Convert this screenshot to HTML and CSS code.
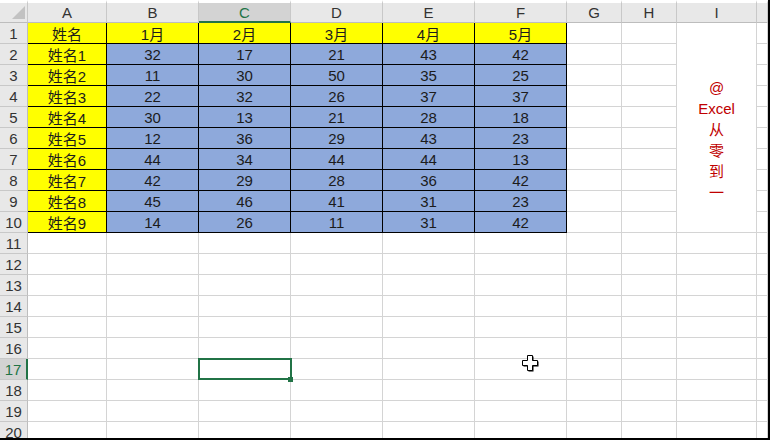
FILE: index.html
```html
<!DOCTYPE html>
<html lang="zh-CN">

<head>
    <meta charset="UTF-8">
    <title>Sheet1</title>
    <link rel="stylesheet" href="styles.css">
</head>

<body>
    <div class="sheet">
        <div class="grid">
            <!-- column headers -->
            <div class="hd corner"><span class="tri"></span></div>
            <div class="hd">A</div>
            <div class="hd">B</div>
            <div class="hd sel">C</div>
            <div class="hd">D</div>
            <div class="hd">E</div>
            <div class="hd">F</div>
            <div class="hd">G</div>
            <div class="hd">H</div>
            <div class="hd">I</div>
            <div class="hd"></div>

            <!-- row 1 -->
            <div class="rh">1</div>
            <div class="c y">姓名</div>
            <div class="c y">1月</div>
            <div class="c y">2月</div>
            <div class="c y">3月</div>
            <div class="c y">4月</div>
            <div class="c y">5月</div>
            <div class="c"></div>
            <div class="c"></div>
            <div class="c merged">
                <span>@</span><span>Excel</span><span>从</span><span>零</span><span>到</span><span>一</span>
            </div>
            <div class="c"></div>

            <div class="rh">2</div>
            <div class="c y">姓名1</div>
            <div class="c b">32</div><div class="c b">17</div><div class="c b">21</div><div class="c b">43</div><div class="c b">42</div>
            <div class="c"></div><div class="c"></div><div class="c"></div>

            <div class="rh">3</div>
            <div class="c y">姓名2</div>
            <div class="c b">11</div><div class="c b">30</div><div class="c b">50</div><div class="c b">35</div><div class="c b">25</div>
            <div class="c"></div><div class="c"></div><div class="c"></div>

            <div class="rh">4</div>
            <div class="c y">姓名3</div>
            <div class="c b">22</div><div class="c b">32</div><div class="c b">26</div><div class="c b">37</div><div class="c b">37</div>
            <div class="c"></div><div class="c"></div><div class="c"></div>

            <div class="rh">5</div>
            <div class="c y">姓名4</div>
            <div class="c b">30</div><div class="c b">13</div><div class="c b">21</div><div class="c b">28</div><div class="c b">18</div>
            <div class="c"></div><div class="c"></div><div class="c"></div>

            <div class="rh">6</div>
            <div class="c y">姓名5</div>
            <div class="c b">12</div><div class="c b">36</div><div class="c b">29</div><div class="c b">43</div><div class="c b">23</div>
            <div class="c"></div><div class="c"></div><div class="c"></div>

            <div class="rh">7</div>
            <div class="c y">姓名6</div>
            <div class="c b">44</div><div class="c b">34</div><div class="c b">44</div><div class="c b">44</div><div class="c b">13</div>
            <div class="c"></div><div class="c"></div><div class="c"></div>

            <div class="rh">8</div>
            <div class="c y">姓名7</div>
            <div class="c b">42</div><div class="c b">29</div><div class="c b">28</div><div class="c b">36</div><div class="c b">42</div>
            <div class="c"></div><div class="c"></div><div class="c"></div>

            <div class="rh">9</div>
            <div class="c y">姓名8</div>
            <div class="c b">45</div><div class="c b">46</div><div class="c b">41</div><div class="c b">31</div><div class="c b">23</div>
            <div class="c"></div><div class="c"></div><div class="c"></div>

            <div class="rh">10</div>
            <div class="c y">姓名9</div>
            <div class="c b">14</div><div class="c b">26</div><div class="c b">11</div><div class="c b">31</div><div class="c b">42</div>
            <div class="c"></div><div class="c"></div><div class="c"></div>

            <!-- empty rows -->
            <div class="rh">11</div>
            <div class="c"></div><div class="c"></div><div class="c"></div><div class="c"></div><div class="c"></div><div class="c"></div><div class="c"></div><div class="c"></div><div class="c"></div><div class="c"></div>
            <div class="rh">12</div>
            <div class="c"></div><div class="c"></div><div class="c"></div><div class="c"></div><div class="c"></div><div class="c"></div><div class="c"></div><div class="c"></div><div class="c"></div><div class="c"></div>
            <div class="rh">13</div>
            <div class="c"></div><div class="c"></div><div class="c"></div><div class="c"></div><div class="c"></div><div class="c"></div><div class="c"></div><div class="c"></div><div class="c"></div><div class="c"></div>
            <div class="rh">14</div>
            <div class="c"></div><div class="c"></div><div class="c"></div><div class="c"></div><div class="c"></div><div class="c"></div><div class="c"></div><div class="c"></div><div class="c"></div><div class="c"></div>
            <div class="rh">15</div>
            <div class="c"></div><div class="c"></div><div class="c"></div><div class="c"></div><div class="c"></div><div class="c"></div><div class="c"></div><div class="c"></div><div class="c"></div><div class="c"></div>
            <div class="rh">16</div>
            <div class="c"></div><div class="c"></div><div class="c"></div><div class="c"></div><div class="c"></div><div class="c"></div><div class="c"></div><div class="c"></div><div class="c"></div><div class="c"></div>
            <div class="rh sel">17</div>
            <div class="c"></div><div class="c"></div><div class="c active"></div><div class="c"></div><div class="c"></div><div class="c"></div><div class="c"></div><div class="c"></div><div class="c"></div><div class="c"></div>
            <div class="rh">18</div>
            <div class="c"></div><div class="c"></div><div class="c"></div><div class="c"></div><div class="c"></div><div class="c"></div><div class="c"></div><div class="c"></div><div class="c"></div><div class="c"></div>
            <div class="rh">19</div>
            <div class="c"></div><div class="c"></div><div class="c"></div><div class="c"></div><div class="c"></div><div class="c"></div><div class="c"></div><div class="c"></div><div class="c"></div><div class="c"></div>
            <div class="rh">20</div>
            <div class="c"></div><div class="c"></div><div class="c"></div><div class="c"></div><div class="c"></div><div class="c"></div><div class="c"></div><div class="c"></div><div class="c"></div><div class="c"></div>
        </div>

        <!-- mouse pointer over the sheet -->
        <svg class="pointer" width="17" height="17" viewBox="0 0 17 17">
            <path d="M6.5 1.5h5v5h5v5h-5v5h-5v-5h-5v-5h5z" fill="#000" />
            <path d="M5.5 0.5h5v5h5v5h-5v5h-5v-5h-5v-5h5z" fill="#fff" stroke="#000" stroke-width="1" />
        </svg>
    </div>
</body>

</html>
```

FILE: styles.css
```css
body {
    margin: 0;
    background: #fff;
    font-family: "Liberation Sans", "Noto Sans CJK SC", sans-serif;
}

.sheet {
    position: relative;
    width: 768px;
    height: 438px;
    overflow: hidden;
    border-right: 2px solid #000;
    border-bottom: 2px solid #000;
}

.grid {
    display: grid;
    grid-template-columns: 28px 79px 92px 92px 92px 92px 92px 55px 55px 80px 1fr;
    grid-template-rows: 23px;
    grid-auto-rows: 21px;
}

.grid > div {
    box-sizing: border-box;
    display: flex;
    align-items: center;
    justify-content: center;
    font-size: 15px;
    color: #1c1c1c;
    white-space: nowrap;
}

/* headers */
.hd {
    background: #e8e8e8;
    border-top: 3px solid #fff;
    border-right: 1px solid #c8c8c8;
    border-bottom: 1px solid #bdbdbd;
    color: #333 !important;
}

.hd.corner {
    justify-content: flex-end;
    align-items: flex-end;
    padding: 0 2px 3px 0;
}

.tri {
    width: 0;
    height: 0;
    border-left: 13px solid transparent;
    border-bottom: 13px solid #c2c2c2;
}

.hd.sel {
    background: #d3d3d3;
    border-bottom: 2px solid #217346;
    color: #217346 !important;
}

.rh {
    background: #e8e8e8;
    border-right: 1px solid #bdbdbd;
    border-bottom: 1px solid #c8c8c8;
    color: #333 !important;
}

.rh.sel {
    background: #d3d3d3;
    border-right: 2px solid #217346;
    color: #217346 !important;
}

/* cells */
.c {
    border-right: 1px solid #d4d4d4;
    border-bottom: 1px solid #d4d4d4;
}

.c.y {
    background: #ffff00;
    border-color: #000;
}

.c.b {
    background: #8ea9db;
    border-color: #000;
}

.c.merged {
    grid-row: span 10;
    flex-direction: column;
    justify-content: flex-start;
    padding-top: 54px;
    color: #c00000;
    line-height: 21px;
}

.c.active {
    position: relative;
}

.c.active::after {
    content: "";
    position: absolute;
    top: -1px;
    left: -1px;
    right: -2px;
    bottom: -1px;
    border: 2px solid #217346;
}

.c.active::before {
    content: "";
    position: absolute;
    right: -3px;
    bottom: -3px;
    width: 5px;
    height: 5px;
    background: #217346;
    z-index: 1;
}

.pointer {
    position: absolute;
    left: 522px;
    top: 355px;
}
```
